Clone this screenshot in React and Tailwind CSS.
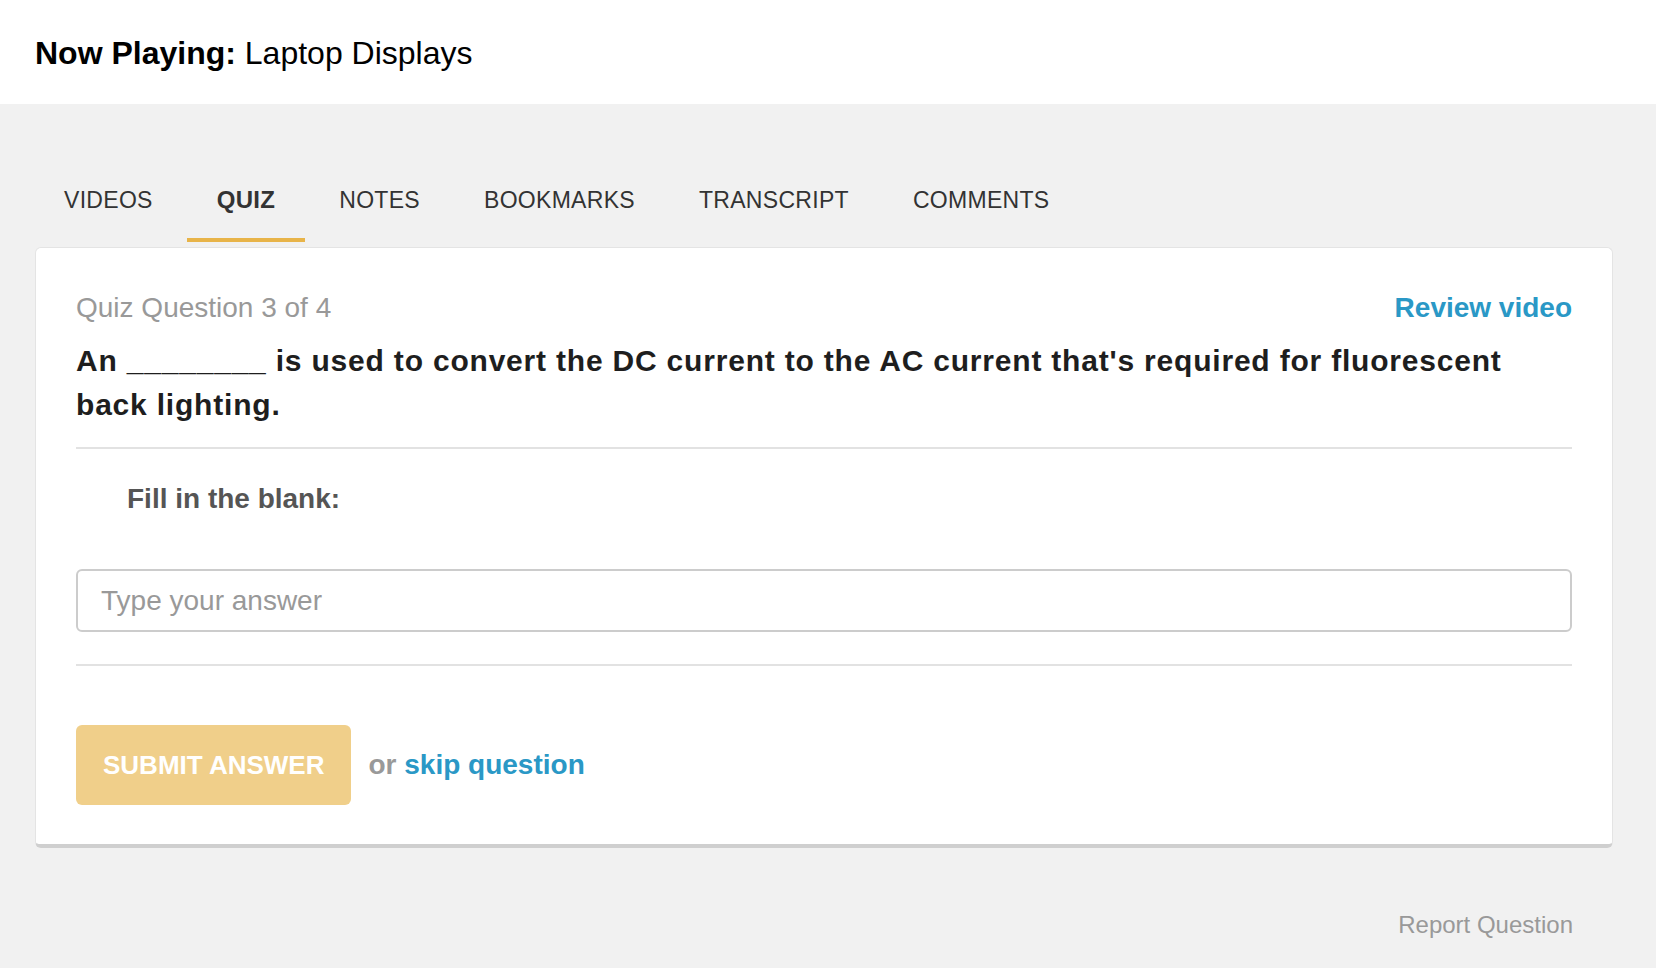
import React, { useState } from "react";

const tabs = ["VIDEOS", "QUIZ", "NOTES", "BOOKMARKS", "TRANSCRIPT", "COMMENTS"];

const App = () => {
	const [active, setActive] = useState("QUIZ");
	const [answer, setAnswer] = useState("");

	return (
		<div className="min-h-screen bg-[#f1f1f1] font-['Liberation_Sans',Arial,sans-serif]">
			{/* Header */}
			<header className="h-[104px] bg-white flex items-center px-[35px]">
				<h1 className="text-[32px] leading-[38px] text-black pt-[2px]">
					<span className="font-bold">Now Playing:</span> Laptop Displays
				</h1>
			</header>

			<main className="pt-[83px] pl-[35px] pr-[43px]">
				{/* Tabs */}
				<nav className="flex gap-[4px] -ml-[1px]">
					{tabs.map((tab) => (
						<button
							key={tab}
							onClick={() => setActive(tab)}
							className={`px-[30px] pb-[25px] text-[23px] leading-[26px] tracking-[0.3px] text-[#333] border-b-4 ${
								active === tab
									? "font-bold text-[24px] tracking-[0.2px] border-[#e8b449]"
									: "border-transparent"
							}`}
						>
							{tab}
						</button>
					))}
				</nav>

				{/* Quiz card */}
				<div className="mt-[5px] bg-white border border-[#e4e4e4] border-b-4 border-b-[#cfcfcf] rounded-[6px] px-[40px] pt-[43px] pb-[39px]">
					<div className="flex justify-between items-center text-[28px] leading-[34px]">
						<span className="text-[#999]">Quiz Question 3 of 4</span>
						<a href="#" className="font-bold text-[#2a98c6]">
							Review video
						</a>
					</div>

					<p className="mt-[14px] text-[30px] leading-[44px] tracking-[0.8px] font-bold text-[#1e1e1e]">
						An ________ is used to convert the DC current to the AC current that's
						required for fluorescent back lighting.
					</p>

					<div className="mt-[20px] border-t-2 border-[#e2e2e2]" />

					<p className="mt-[33px] pl-[51px] text-[28px] leading-[34px] font-bold text-[#555]">
						Fill in the blank:
					</p>

					<input
						type="text"
						value={answer}
						onChange={(e) => setAnswer(e.target.value)}
						placeholder="Type your answer"
						className="mt-[53px] block w-full h-[63px] border-2 border-[#cccccc] rounded-[6px] px-[23px] text-[28px] text-[#333] placeholder:text-[#999] outline-none"
					/>

					<div className="mt-[32px] border-t-2 border-[#e2e2e2]" />

					<div className="mt-[59px] flex items-center gap-[17px]">
						<button
							disabled={!answer}
							className="h-[80px] px-[27px] rounded-[6px] bg-[#f0cf8a] text-white text-[26px] font-bold"
						>
							SUBMIT ANSWER
						</button>
						<span className="text-[28px] font-bold text-[#999]">
							or{" "}
							<a href="#" className="text-[#2a98c6]">
								skip question
							</a>
						</span>
					</div>
				</div>

				<div className="mt-[63px] pr-[40px] flex justify-end">
					<a href="#" className="text-[24px] leading-[28px] text-[#999]">
						Report Question
					</a>
				</div>
			</main>
		</div>
	);
};

export default App;
